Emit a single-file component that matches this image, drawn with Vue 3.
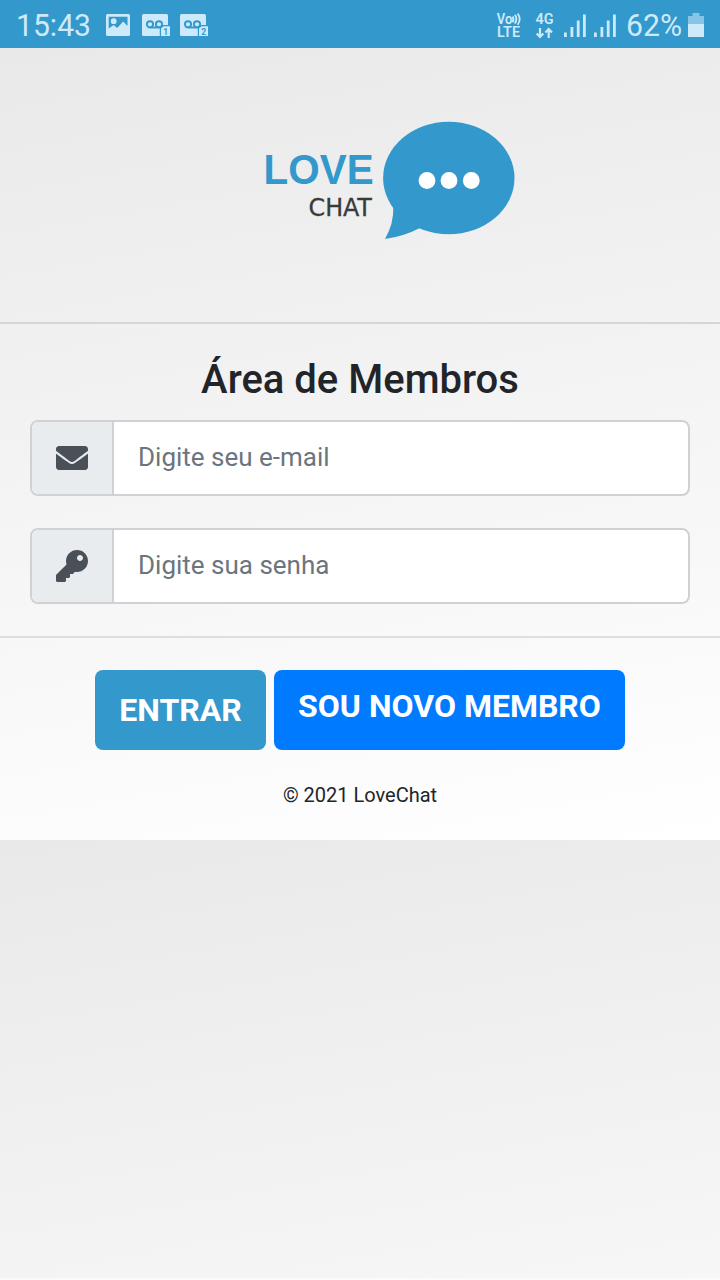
<script setup>
const fields = [
  {
    id: 'email',
    type: 'email',
    placeholder: 'Digite seu e-mail',
    icon: 'M502.3 190.8c3.9-3.1 9.7-.2 9.7 4.7V400c0 26.5-21.5 48-48 48H48c-26.5 0-48-21.5-48-48V195.6c0-5 5.7-7.8 9.7-4.7 22.4 17.4 52.1 39.5 154.1 113.6 21.1 15.4 56.7 47.8 92.2 47.6 35.7.3 72-32.8 92.3-47.6 102-74.1 131.6-96.3 154-113.7zM256 320c23.2.4 56.6-29.2 73.4-41.4 132.7-96.3 142.8-104.7 173.4-128.7 5.8-4.5 9.2-11.5 9.2-18.9v-19c0-26.5-21.5-48-48-48H48c-26.5 0-48 21.5-48 48v19c0 7.4 3.4 14.3 9.2 18.9 30.6 23.9 40.7 32.4 173.4 128.7 16.8 12.2 50.2 41.8 73.4 41.4z',
  },
  {
    id: 'senha',
    type: 'password',
    placeholder: 'Digite sua senha',
    icon: 'M512 176.001C512 273.203 433.202 352 336 352c-11.22 0-22.19-1.062-32.827-3.069l-24.012 27.014A23.999 23.999 0 0 1 261.223 384H224v40c0 13.255-10.745 24-24 24h-40v40c0 13.255-10.745 24-24 24H24c-13.255 0-24-10.745-24-24v-78.059c0-6.365 2.529-12.47 7.029-16.971l161.802-161.802C163.108 213.814 160 195.271 160 176 160 78.798 238.797.001 335.999 0 433.488-.001 512 78.511 512 176.001zM336 128c0 26.51 21.49 48 48 48s48-21.49 48-48-21.49-48-48-48-48 21.49-48 48z',
  },
]
</script>

<template>
  <div class="screen">
    <header class="status">
      <svg class="status-left" width="220" height="48" viewBox="0 0 220 48">
        <text x="16" y="36" font-size="30.5" textLength="75" lengthAdjust="spacingAndGlyphs">15:43</text>
        <path fill-rule="evenodd" d="M107.500 14h21a1.500 1.500 0 0 1 1.500 1.500v19a1.500 1.500 0 0 1-1.500 1.500h-21a1.500 1.500 0 0 1-1.500-1.500v-19a1.500 1.500 0 0 1 1.500-1.500zM108.700 16.700v11.800l5-3.500 3.500 3 6-6.500 4.300 4.500v-9.300zM113.700 18.300a2.900 2.900 0 1 1 0 5.800 2.900 2.900 0 0 1 0-5.800z" />
        <g v-for="n in 2" :key="n" :transform="`translate(${142 + (n - 1) * 38} 14)`">
          <rect width="26" height="22" rx="1.500" />
          <g fill="none" class="cut" stroke-width="1.900">
            <circle cx="8" cy="10.300" r="3.100" />
            <circle cx="17" cy="10.300" r="3.100" />
            <path d="M8 13.500h9.500" />
          </g>
          <path class="cut-fill" d="M17.800 13.500l2.700-2.500H28v11H17.800z" />
          <path d="M21.500 12.300h6.500v9.700h-9v-7.500z" />
          <text class="sim" x="21.300" y="20.700" font-size="8.500" font-weight="700">{{ n }}</text>
        </g>
      </svg>
      <svg class="status-right" width="230" height="48" viewBox="490 0 230 48">
        <text x="496.800" y="23.500" font-size="14" font-weight="600" textLength="15.500" lengthAdjust="spacingAndGlyphs">Vo</text>
        <g fill="none" class="line" stroke-width="1.800">
          <path d="M512.600 16.500q1.800 2.900 0 5.800M514.800 14.800q3.200 4.300 0 8.800M517.600 13.600q4.200 5.400 0 11.200" />
        </g>
        <text x="497" y="37" font-size="14" font-weight="600" textLength="23" lengthAdjust="spacingAndGlyphs">LTE</text>
        <text x="535.500" y="24" font-size="14.500" font-weight="600" textLength="18" lengthAdjust="spacingAndGlyphs">4G</text>
        <g fill="none" class="line" stroke-width="2.200">
          <path d="M540 28v8.500M536.700 33.500l3.300 3.500 3.300-3.500M548.700 38v-8.500M545.400 32.500l3.300-3.500 3.300 3.500" />
        </g>
        <g v-for="x in [564, 594]" :key="x">
          <rect :x="x" y="32.500" width="2.800" height="4.500" />
          <rect :x="x + 6.500" y="27" width="2.800" height="10" />
          <rect :x="x + 12.800" y="20.500" width="2.800" height="16.500" />
          <rect :x="x + 19" y="14.500" width="2.800" height="22.500" />
        </g>
        <text x="626" y="36" font-size="30.500" textLength="56" lengthAdjust="spacingAndGlyphs">62%</text>
        <path opacity=".55" d="M692.500 13h7v3h4.500v8h-16v-8h4.500z" />
        <rect x="688" y="24" width="16" height="13" />
      </svg>
    </header>

    <main class="page">
      <section class="panel">
        <div class="brand">
          <svg width="252" height="122" viewBox="264 120 252 122" role="img" aria-label="Love Chat">
            <text class="love" x="263.600" y="184" font-size="42.500" font-weight="700" textLength="110" lengthAdjust="spacingAndGlyphs">LOVE</text>
            <text class="chat" x="308.500" y="216.300" font-size="25.300" textLength="63.300" lengthAdjust="spacingAndGlyphs">CHAT</text>
            <ellipse class="bubble" cx="448.800" cy="178" rx="65.700" ry="56.300" />
            <path class="bubble" d="M389 200q4.300 4 4.400 7q.3 17-8.400 32q18.500-2.500 35-11l10-14z" />
            <circle v-for="x in [427, 449, 471.300]" :key="x" class="dot" :cx="x" cy="180.500" r="8.400" />
          </svg>
        </div>

        <form class="members" @submit.prevent>
          <h1>Área de Membros</h1>
          <div class="fields">
            <label v-for="f in fields" :key="f.id" class="group">
              <span class="addon">
                <svg width="32" height="32" viewBox="0 0 512 512"><path :d="f.icon" /></svg>
              </span>
              <input :type="f.type" :placeholder="f.placeholder" />
            </label>
          </div>
        </form>

        <div class="actions">
          <button class="btn enter" type="button">ENTRAR</button>
          <a class="btn join">SOU NOVO MEMBRO</a>
        </div>
        <p class="copy">© 2021 LoveChat</p>
      </section>
    </main>
  </div>
</template>

<style>
body {
  margin: 0;
}
</style>

<style scoped>
.screen,
.screen * {
  box-sizing: border-box;
}
.screen {
  width: 720px;
  height: 1280px;
  display: flex;
  flex-direction: column;
  overflow: hidden;
  font-family: Roboto, sans-serif;
  color: #212529;
}
.status {
  height: 48px;
  flex: none;
  display: flex;
  justify-content: space-between;
  background: #3398cc;
  fill: #cdeafa;
}
.status svg {
  display: block;
}
.status text {
  font-family: Roboto, sans-serif;
}
.cut {
  stroke: #3398cc;
}
.cut-fill,
.status .sim {
  fill: #3398cc;
}
.line {
  stroke: #cdeafa;
}
.page {
  flex: 1;
  border-bottom: 2px solid #fbfbfb;
  background: linear-gradient(170deg, #e9e9e9, #fff) 0 0 / 720px 792px repeat-y;
}
.panel {
  height: 792px;
}
.brand {
  height: 276px;
  padding: 72px 0 0 264px;
  border-bottom: 2px solid #d6d6d7;
}
.brand svg {
  display: block;
  overflow: visible;
}
.love {
  font-family: "Liberation Sans", sans-serif;
  fill: #3398cc;
}
.chat {
  font-family: "DejaVu Sans Condensed", "DejaVu Sans", sans-serif;
  font-stretch: semi-condensed;
  fill: #3a3a3a;
  stroke: #3a3a3a;
  stroke-width: 0.3px;
}
.bubble {
  fill: #3398cc;
}
.dot {
  fill: #fff;
}
.members {
  height: 314px;
  padding: 32px 30px 0;
  border-bottom: 2px solid #dedede;
}
h1 {
  margin: 0 0 16px;
  font-size: 40px;
  line-height: 48px;
  font-weight: 500;
  text-align: center;
}
.fields {
  display: grid;
  gap: 32px;
}
.group {
  display: flex;
  height: 76px;
  border: 2px solid #ced2d6;
  border-radius: 8px;
  background: #fff;
  overflow: hidden;
}
.addon {
  width: 82px;
  flex: none;
  display: flex;
  align-items: center;
  justify-content: center;
  background: #e9ecef;
  border-right: 2px solid #ced2d6;
  fill: #495057;
}
input {
  flex: 1;
  min-width: 0;
  border: 0;
  outline: 0;
  padding: 0 24px 3px;
  background: transparent;
  font: 400 26px Roboto, sans-serif;
  color: #495057;
}
input::placeholder {
  color: #6c757d;
  opacity: 1;
}
.actions {
  display: flex;
  justify-content: center;
  gap: 8px;
  padding-top: 32px;
}
.btn {
  height: 80px;
  border: 0;
  border-radius: 8px;
  padding: 0;
  font: 700 32px/72px Roboto, sans-serif;
  color: #fff;
  text-align: center;
  white-space: nowrap;
}
.enter {
  width: 171px;
  padding-bottom: 1px;
  background: #3398cc;
}
.join {
  width: 351px;
  background: #007bff;
}
.copy {
  margin: 30px 0 0;
  font-size: 20px;
  line-height: 30px;
  text-align: center;
}
</style>
